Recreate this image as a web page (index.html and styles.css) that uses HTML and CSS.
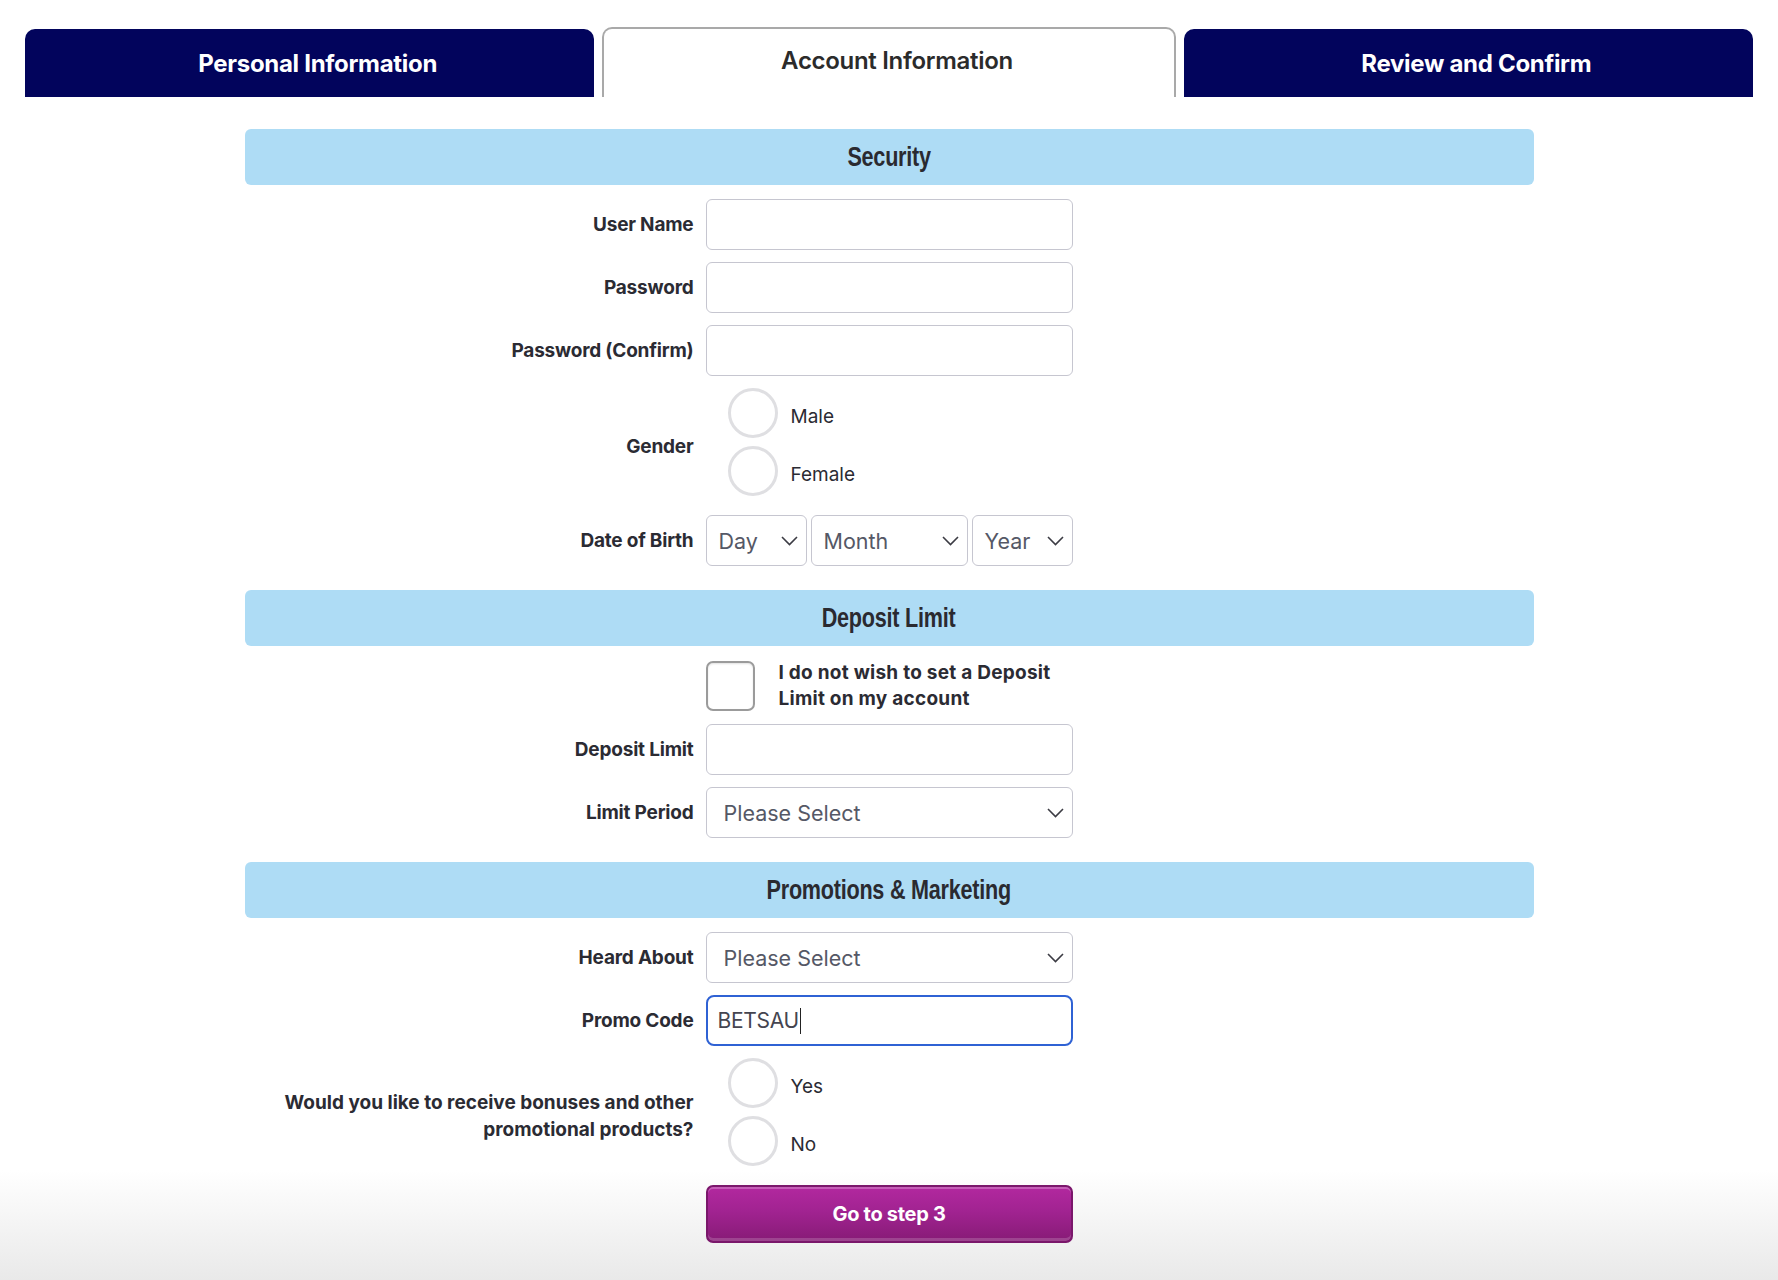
FILE: index.html
```html
<!DOCTYPE html>
<html lang="en">
<head>
<meta charset="utf-8">
<title>Account Information</title>
<link rel="stylesheet" href="styles.css">
</head>
<body>
<div class="tabs">
  <div class="tab tab-dark">Personal Information</div>
  <div class="tab tab-active">Account Information</div>
  <div class="tab tab-dark">Review and Confirm</div>
</div>

<form class="form">
  <h2 class="band"><span class="band-text">Security</span></h2>

  <div class="row">
    <label class="lbl">User Name</label>
    <div class="field"></div>
  </div>
  <div class="row">
    <label class="lbl">Password</label>
    <div class="field"></div>
  </div>
  <div class="row">
    <label class="lbl">Password (Confirm)</label>
    <div class="field"></div>
  </div>
  <div class="row row-radio">
    <label class="lbl">Gender</label>
    <div class="radios">
      <div class="opt"><span class="radio"></span><span class="opt-text">Male</span></div>
      <div class="opt"><span class="radio"></span><span class="opt-text">Female</span></div>
    </div>
  </div>
  <div class="row">
    <label class="lbl">Date of Birth</label>
    <div class="dob">
      <div class="select sel-day"><span class="sel-text">Day</span><svg class="chev" viewBox="0 0 17 10"><polyline points="1,1 8.5,8.5 16,1"/></svg></div>
      <div class="select sel-month"><span class="sel-text">Month</span><svg class="chev" viewBox="0 0 17 10"><polyline points="1,1 8.5,8.5 16,1"/></svg></div>
      <div class="select sel-year"><span class="sel-text">Year</span><svg class="chev" viewBox="0 0 17 10"><polyline points="1,1 8.5,8.5 16,1"/></svg></div>
    </div>
  </div>

  <h2 class="band"><span class="band-text">Deposit Limit</span></h2>

  <div class="row row-check">
    <span class="lbl"></span>
    <div class="check-wrap">
      <span class="checkbox"></span>
      <span class="check-text">I do not wish to set a Deposit Limit on my account</span>
    </div>
  </div>
  <div class="row">
    <label class="lbl">Deposit Limit</label>
    <div class="field"></div>
  </div>
  <div class="row">
    <label class="lbl">Limit Period</label>
    <div class="select select-wide"><span class="sel-text sel-please">Please Select</span><svg class="chev" viewBox="0 0 17 10"><polyline points="1,1 8.5,8.5 16,1"/></svg></div>
  </div>

  <h2 class="band"><span class="band-text">Promotions &amp; Marketing</span></h2>

  <div class="row">
    <label class="lbl">Heard About</label>
    <div class="select select-wide"><span class="sel-text sel-please">Please Select</span><svg class="chev" viewBox="0 0 17 10"><polyline points="1,1 8.5,8.5 16,1"/></svg></div>
  </div>
  <div class="row">
    <label class="lbl">Promo Code</label>
    <div class="field field-focus"><span class="typed">BETSAU</span><span class="caret"></span></div>
  </div>
  <div class="row row-radio row-radio-2">
    <label class="lbl lbl-multi">Would you like to receive bonuses and other<br>promotional products?</label>
    <div class="radios">
      <div class="opt"><span class="radio"></span><span class="opt-text">Yes</span></div>
      <div class="opt"><span class="radio"></span><span class="opt-text">No</span></div>
    </div>
  </div>
  <div class="row">
    <span class="lbl"></span>
    <button type="button" class="btn">Go to step 3</button>
  </div>
</form>
</body>
</html>
```

FILE: styles.css
```css
html {
  background: linear-gradient(to bottom, #ffffff 0, #ffffff 1170px, #e9e9e9 1280px);
  min-height: 100%;
}
body {
  margin: 0;
  min-height: 1280px;
  font-family: Inter, "Noto Sans", sans-serif;
  color: #2b2b33;
}

/* Tabs */
.tabs {
  display: flex;
  align-items: flex-end;
  gap: 8px;
  padding: 27px 25px 0;
}
.tab {
  flex: 1;
  display: flex;
  align-items: center;
  justify-content: center;
  padding-left: 16px;
  font-weight: 700;
  font-size: 24px;
  letter-spacing: -0.3px;
  border-top-left-radius: 10px;
  border-top-right-radius: 10px;
  box-sizing: border-box;
}
.tab-dark {
  height: 68px;
  background: #02045c;
  color: #ffffff;
}
.tab-active {
  height: 70px;
  background: #ffffff;
  color: #2b2b2b;
  border: 2px solid #a9a9a9;
  border-bottom: none;
  font-weight: 600;
  padding-bottom: 6px;
}

/* Form */
.form {
  width: 1289px;
  margin: 32px auto 0;
}
.band {
  margin: 24px 0 14px;
  height: 56px;
  border-radius: 6px;
  background: #aedcf5;
  color: #2a2a30;
  display: flex;
  align-items: center;
  justify-content: center;
}
.form > .band:first-child {
  margin-top: 0;
}
.band-text {
  display: inline-block;
  font-family: "Liberation Sans", Arial, sans-serif;
  font-weight: 700;
  font-size: 27px;
  letter-spacing: -0.3px;
  transform: scaleX(0.8);
}
.row {
  display: grid;
  grid-template-columns: 449px 367px;
  column-gap: 12px;
  align-items: center;
  margin-bottom: 12px;
}
.lbl {
  text-align: right;
  font-weight: 700;
  font-size: 19px;
  letter-spacing: -0.2px;
  color: #2b2b33;
}
.row-radio .lbl {
  padding-top: 8px;
}
.lbl-multi {
  line-height: 27px;
  letter-spacing: 0;
}
.field {
  height: 51px;
  box-sizing: border-box;
  border: 1px solid #c6c6d0;
  border-radius: 6px;
  background: #fff;
  display: flex;
  align-items: center;
  padding: 0 11px;
}
.field-focus {
  border: 2px solid #2f62d4;
  border-radius: 8px;
  padding: 0 10px;
}
.typed {
  font-size: 21px;
  color: #454550;
  letter-spacing: -0.3px;
}
.caret {
  display: inline-block;
  width: 1.5px;
  height: 26px;
  background: #222;
  margin-left: 1px;
}

/* Radios */
.row-radio {
  margin-bottom: 19px;
}
.radios {
  display: flex;
  flex-direction: column;
  gap: 8px;
  padding-left: 22px;
}
.opt {
  display: flex;
  align-items: center;
  height: 50px;
}
.radio {
  width: 50px;
  height: 50px;
  box-sizing: border-box;
  border: 3px solid #dfdfe2;
  border-radius: 50%;
  background: #fff;
  flex: none;
}
.opt-text {
  margin-left: 13px;
  padding-top: 6px;
  font-size: 19px;
  color: #2b2b33;
}

/* Selects */
.dob {
  display: flex;
  gap: 4px;
}
.select {
  height: 51px;
  box-sizing: border-box;
  border: 1px solid #c6c6d0;
  border-radius: 6px;
  background: #fff;
  display: flex;
  align-items: center;
  justify-content: space-between;
  padding: 0 8px 0 12px;
}
.sel-day { width: 101px; }
.sel-month { width: 157px; }
.sel-year { width: 101px; }
.sel-text {
  font-size: 21.5px;
  color: #555866;
}
.sel-please {
  padding-left: 5px;
}
.chev {
  width: 17px;
  height: 10px;
  fill: none;
  stroke: #3c3c44;
  stroke-width: 1.6;
}

/* Checkbox */
.check-wrap {
  display: flex;
  align-items: center;
  gap: 24px;
}
.checkbox {
  width: 49px;
  height: 50px;
  box-sizing: border-box;
  border: 2px solid #9b9b9b;
  border-radius: 7px;
  background: #fff;
  box-shadow: inset 0 1px 2px rgba(0,0,0,0.12);
  flex: none;
}
.check-text {
  font-weight: 700;
  font-size: 19px;
  line-height: 26px;
  letter-spacing: 0.25px;
  color: #2b2b33;
}

/* Button */
.btn {
  height: 58px;
  border: 2px solid #7a176b;
  border-radius: 7px;
  background: linear-gradient(to bottom, #b2289f 0%, #a12391 45%, #871b76 100%);
  box-shadow: inset 0 2px 0 rgba(255,255,255,0.25), inset 0 -3px 0 rgba(255,255,255,0.18);
  color: #fff;
  font-family: Inter, "Noto Sans", sans-serif;
  font-weight: 700;
  font-size: 20px;
  letter-spacing: -0.3px;
  cursor: pointer;
}
```
